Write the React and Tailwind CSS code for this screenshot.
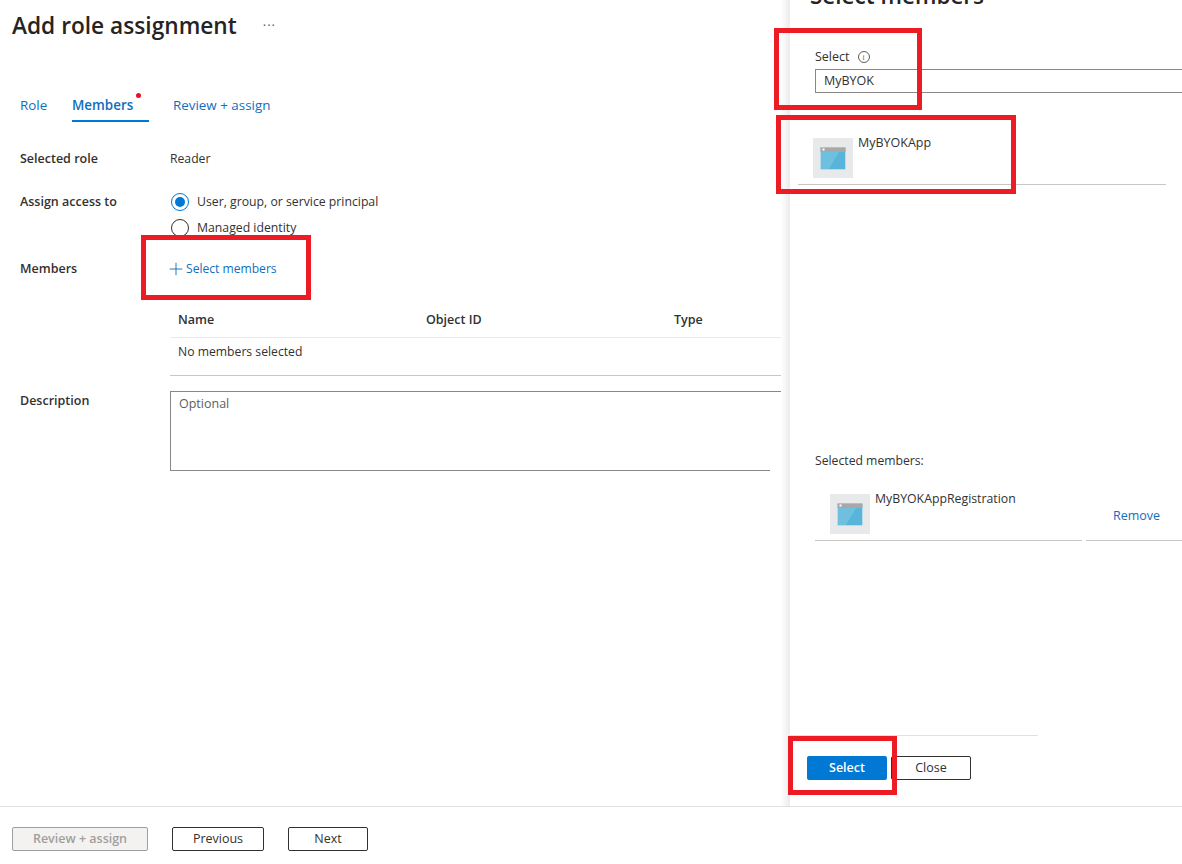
import React from 'react';
import { Plus } from 'lucide-react';

// Small app-registration tile used in the member lists
const AppTile = () => (
    <div className="w-10 h-10 bg-[#e8e9ea] flex items-center justify-center shrink-0">
        <svg width="26" height="23" viewBox="0 0 26 23">
            <rect x="0.5" y="0.5" width="25" height="22" rx="1" fill="#6fc0df" stroke="#b9dcea" />
            <path d="M9 22 L25 22 L25 5 L19 5 Z" fill="#59b4d9" />
            <rect x="0.5" y="0.5" width="25" height="4.5" fill="#a8a8a8" />
            <rect x="2.5" y="1.5" width="2" height="2" fill="#ffffff" />
        </svg>
    </div>
);

const Tab = ({ children, active, dot, className }) => (
    <div className={`relative h-[30px] pt-[4px] text-[13.4px] ${active ? 'border-b-2 border-[#0078d4] font-semibold text-[13.2px]' : ''} ${className}`}>
        {children}
        {dot && <span className="absolute left-[64px] top-[1px] w-[5px] h-[5px] rounded-full bg-[#e81123]" />}
    </div>
);

const Radio = ({ checked, label }) => (
    <div className="flex items-center h-[26px]">
        <span className={`w-[18px] h-[18px] rounded-full border flex items-center justify-center ${checked ? 'border-[#0078d4]' : 'border-[#323130]'}`}>
            {checked && <span className="w-[10px] h-[10px] rounded-full bg-[#0078d4]" />}
        </span>
        <span className="ml-[8px] text-[12.25px]">{label}</span>
    </div>
);

const Callout = ({ className }) => (
    <div className={`absolute border-[5px] border-[#ed1c24] pointer-events-none ${className}`} />
);

const App = () => {
    return (
        <div className="relative w-[1182px] h-[864px] overflow-hidden bg-white text-[12.5px] leading-[18px] text-[#323130] font-['Open_Sans','Liberation_Sans',sans-serif]">
            <div className="flex h-[807px] border-b border-[#e1e1e1]">
                {/* blade content */}
                <div className="w-[781px] shrink-0 overflow-hidden">
                    <div className="flex items-center h-[32px] mt-[10px] pl-[12px]">
                        <h1 className="text-[22.7px] leading-[32px] font-semibold text-[#252423]">Add role assignment</h1>
                        <span className="ml-[26px] -mt-[2px] text-[#605e5c] text-[13px] leading-[18px] tracking-[1px]">···</span>
                    </div>

                    <div className="flex mt-[50px] pl-[20px] text-[#106ebe]">
                        <Tab className="w-[52px]">Role</Tab>
                        <Tab active dot className="w-[77px]">Members</Tab>
                        <Tab className="ml-[24px]">Review + assign</Tab>
                    </div>

                    <div className="flex mt-[28px] pl-[20px]">
                        <div className="w-[150px] font-semibold">Selected role</div>
                        <div className="text-[12.2px]">Reader</div>
                    </div>

                    <div className="flex mt-[21px] pl-[20px]">
                        <div className="w-[150px] font-semibold pt-[4px]">Assign access to</div>
                        <div className="pl-[1px]">
                            <Radio checked label="User, group, or service principal" />
                            <Radio label="Managed identity" />
                        </div>
                    </div>

                    <div className="flex items-center mt-[19px] pl-[20px]">
                        <div className="w-[150px] font-semibold">Members</div>
                        <div className="flex items-center text-[#106ebe]">
                            <Plus size={20} strokeWidth={1.1} className="-mx-[4px] -my-[2px] -mt-[3px]" />
                            <span className="ml-[4px] text-[12.1px]">Select members</span>
                        </div>
                    </div>

                    <div className="ml-[170px] mt-[33px]">
                        <div className="flex h-[27px] pl-[8px] font-semibold border-b border-[#edebe9]">
                            <div className="w-[248px]">Name</div>
                            <div className="w-[248px]">Object ID</div>
                            <div>Type</div>
                        </div>
                        <div className="h-[38px] pl-[8px] pt-[5px] text-[12.2px] border-b border-[#c8c6c4]">No members selected</div>
                    </div>

                    <div className="flex mt-[15px] pl-[20px]">
                        <div className="w-[150px] pt-[1px] font-semibold">Description</div>
                        <div className="flex-1 h-[80px] flex flex-col justify-between border-t border-l border-[#8a8886]">
                            <div className="pl-[8px] pt-[3px] text-[#605e5c]">Optional</div>
                            <div className="w-[599px] border-b border-[#8a8886]" />
                        </div>
                    </div>
                </div>

                {/* edge shadow of the side panel */}
                <div className="w-[9px] shrink-0 bg-gradient-to-r from-[#ffffff] to-[#ebebeb]" />

                {/* Select members panel */}
                <div className="flex-1 min-w-0 flex flex-col overflow-hidden">
                    <h2 className="text-[22.5px] leading-[28px] -mt-[18px] ml-[20px] font-semibold text-[#252423]">Select members</h2>

                    <div className="flex items-center mt-[38px] ml-[25px]">
                        <span>Select</span>
                        <span className="ml-[8px] w-[12px] h-[12px] rounded-full border border-[#605e5c] text-[#605e5c] flex items-center justify-center text-[8px] leading-none">i</span>
                    </div>
                    <div className="h-[24px] mt-[3px] ml-[25px] pl-[8px] border border-r-0 border-[#8a8886] leading-[22px]">MyBYOK</div>

                    <div className="flex h-[47px] mt-[45px] ml-[8px] w-[368px] pl-[15px] border-b border-[#c8c6c4]">
                        <AppTile />
                        <div className="ml-[5px] -mt-[4px]">MyBYOKApp</div>
                    </div>

                    <div className="mt-[267px] ml-[25px] text-[12.2px]">Selected members:</div>

                    <div className="flex mt-[24px] ml-[25px]">
                        <div className="flex w-[267px] h-[47px] pl-[15px] border-b border-[#c8c6c4]">
                            <AppTile />
                            <div className="ml-[5px] -mt-[4px] text-[12.3px]">MyBYOKAppRegistration</div>
                        </div>
                        <div className="flex-1 ml-[4px] h-[47px] pl-[27px] pt-[13px] border-b border-[#c8c6c4] text-[#106ebe]">Remove</div>
                    </div>

                    <div className="w-[248px] mt-[194px] border-t border-[#e1e1e1]" />

                    <div className="flex mt-[20px] ml-[17px] gap-[4px]">
                        <button className="w-[80px] h-[24px] rounded-[2px] bg-[#0078d4] text-white font-semibold">Select</button>
                        <button className="w-[80px] h-[24px] rounded-[2px] border border-[#323130]">Close</button>
                    </div>
                </div>
            </div>

            {/* bottom action bar */}
            <div className="flex mt-[20px] ml-[12px]">
                <button className="w-[136px] h-[24px] rounded-[2px] border border-[#a19f9d] bg-[#f3f2f1] text-[#a19f9d] font-semibold">Review + assign</button>
                <button className="w-[92px] h-[24px] ml-[24px] rounded-[2px] border border-[#323130]">Previous</button>
                <button className="w-[80px] h-[24px] ml-[24px] rounded-[2px] border border-[#323130]">Next</button>
            </div>

            {/* highlight boxes over the form */}
            <Callout className="left-[141px] top-[235px] w-[170px] h-[65px]" />
            <Callout className="left-[774px] top-[28px] w-[148px] h-[82px]" />
            <Callout className="left-[776px] top-[115px] w-[240px] h-[79px]" />
            <Callout className="left-[788px] top-[736px] w-[109px] h-[59px]" />
        </div>
    );
};

export default App;
